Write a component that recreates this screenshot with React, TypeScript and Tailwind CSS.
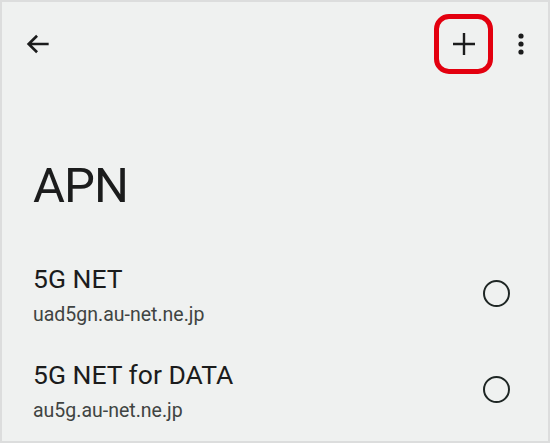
import React from "react"

const items = [
  { name: "5G NET", apn: "uad5gn.au-net.ne.jp" },
  { name: "5G NET for DATA", apn: "au5g.au-net.ne.jp" },
]

export default function App() {
  return (
    <div
      className="w-[550px] h-[443px] border-2 border-[#dcdddd] bg-[#eff1f0] text-[#1b1c1c] overflow-hidden"
      style={{ fontFamily: "Roboto, 'Noto Sans', sans-serif" }}
    >
      {/* Top bar */}
      <div className="flex items-center justify-between pt-[12px] pl-[20px] pr-[24px]">
        <svg width="32" height="32" viewBox="0 0 24 24" className="text-[#1b1c1c]">
          <path d="M20 12H5.2M11.3 5.8 5 12l6.3 6.2" fill="none" stroke="currentColor" strokeWidth="2" />
        </svg>
        <div className="flex items-center">
          <div className="w-[59px] h-[60px] border-[5px] border-[#e3000f] rounded-[15px] flex items-center justify-center">
            <svg width="24" height="24" viewBox="0 0 24 24">
              <path d="M12 1v22M1 12h22" stroke="#1b1c1c" strokeWidth="2.4" />
            </svg>
          </div>
          <svg width="6" height="22" viewBox="0 0 6 22" className="ml-[25px]">
            <circle cx="3" cy="3" r="2.6" fill="#1b1c1c" />
            <circle cx="3" cy="11" r="2.6" fill="#1b1c1c" />
            <circle cx="3" cy="19" r="2.6" fill="#1b1c1c" />
          </svg>
        </div>
      </div>

      {/* Title */}
      <h1 className="pl-[31px] mt-[86px] text-[49px] leading-[52px] font-normal tracking-[-1px]">APN</h1>

      {/* APN list */}
      <div className="mt-[52px] flex flex-col gap-[32px]">
        {items.map((item) => (
          <div key={item.name} className="flex items-center justify-between pl-[31px] pr-[38px]">
            <div>
              <div className="text-[26.5px] leading-[30px]">{item.name}</div>
              <div className="mt-[8px] text-[19.5px] leading-[26px] text-[#3f4442]">{item.apn}</div>
            </div>
            <div className="mb-[6px] w-[27px] h-[27px] rounded-full border-[2.6px] border-[#1e2624]" />
          </div>
        ))}
      </div>
    </div>
  )
}
